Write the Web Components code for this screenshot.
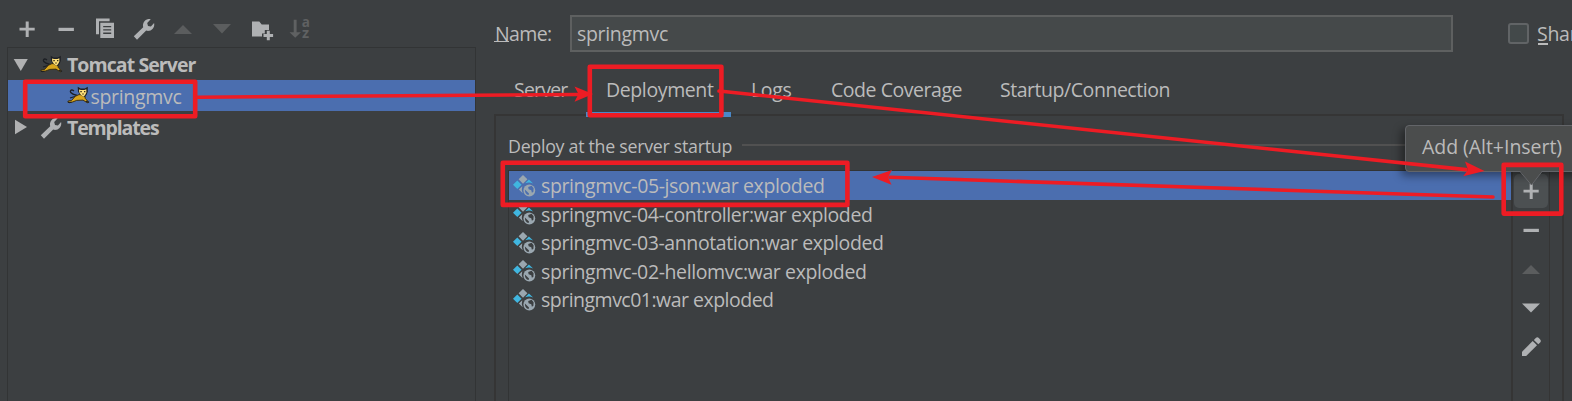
<!DOCTYPE html>
<html lang="en">
<head>
<meta charset="utf-8">
<title>Run/Debug Configurations</title>
<style>
html,body{margin:0;height:100%;overflow:hidden;background:#3c3f41}
body{font-family:"Open Sans","Noto Sans",sans-serif;font-size:19.5px;color:#bbbbbb}
</style>
</head>
<body>
<run-config-dialog></run-config-dialog>
<script>
const define = (name, html, extra) => {
  const tpl = document.createElement('template');
  tpl.innerHTML = html;
  customElements.define(name, class extends HTMLElement {
    constructor() {
      super();
      this.attachShadow({ mode: 'open' }).append(tpl.content.cloneNode(true));
    }
    connectedCallback() { if (extra) extra(this, this.shadowRoot); }
  });
};

/* Label whose letter spacing is adjusted so that it is exactly [w] pixels wide */
define('ui-label', `<style>
  :host{display:inline-block;white-space:pre;line-height:var(--lh,30px)}
  :host([bold]){font-weight:700}
  span{display:inline-block}
</style><span><slot></slot></span>`, (el, root) => {
  const w = parseFloat(el.getAttribute('w'));
  if (!w) return;
  const n = el.textContent.length;
  const span = root.querySelector('span');
  const natural = span.getBoundingClientRect().width;
  el.style.letterSpacing = ((w - natural) / n) + 'px';
  el.style.width = w + 'px';
});

const WRENCH = '<path fill="#afb1b3" d="M1.8 19.2 11.2 10.2C10.3 6.6 12.4 2.9 16.3 2.1 17.3 1.9 18.1 2 18.7 2.2L15.2 5.9 16 8.9 18.9 9.5 22.1 6C22.9 9.8 20.6 13.1 17.4 13.8 16.2 14 15 13.9 14.2 13.6L5 22.8Z"/>';
const ICONS = {
  add: '<path fill="#afb1b3" d="M10.7 4.5h3v6.3h6v2.8h-6V20h-3v-6.4H4.5v-2.8h6.2z"/>',
  remove: '<path fill="#afb1b3" d="M4.5 10.8h15.4v3.2H4.5z"/>',
  copy: '<path fill="#afb1b3" d="M3 1.5h13.6v2.8H6v13H3z"/><path fill="#afb1b3" fill-rule="evenodd" d="M7.3 5.8H21V21H7.3zM10.2 9v1.3h8V9zM10.2 12.2v1.4h8v-1.4zM10.2 15.5v1.4h8v-1.4z"/>',
  wrench: WRENCH,
  up: '<path fill="#5b5d5e" d="M3 17 12 8l9 9z"/>',
  down: '<path fill="#5b5d5e" d="M3 7h18l-9 9.4z"/>',
  downOn: '<path fill="#afb1b3" d="M3 7.4h18l-9 9z"/>',
  folder: '<path fill="#afb1b3" d="M2 4.5h7.3l2.4 3H19v5.4h-4.2v3.6H12V19.500H2z"/><path fill="#afb1b3" d="M16.800 13.800h3v3.200h3.300v2.900h-3.300v3.300h-3v-3.300h-3.300V17h3.300z"/>',
  sort: '<path fill="#5f6162" d="M4.700 2.800h2.900v12.400h4.300L6.200 20.800.500 15.200h4.200z"/><text font-weight="700" fill="#5f6162"><tspan x="12.800" y="10" font-size="13.500">a</tspan><tspan x="13.100" y="20.800" font-size="14.500">z</tspan></text>',
  pencil: '<path fill="#afb1b3" d="M3 16.700 13.700 6l4.300 4.300L7.200 21.100H3z"/><path fill="#afb1b3" d="m14.900 4.900 1.900-1.900q1.500-1.500 3 0l1.400 1.400q1.500 1.500 0 3l-1.900 1.900z"/>',
  open: '<path fill="#b0b1b2" d="M4.700 6h14.100l-7 12z"/>',
  closed: '<path fill="#b0b1b2" d="M6 4.700 18 12 6 19.300z"/>',
  tomcat: '<path fill="none" stroke="#1c1f24" stroke-width="1.300" d="M11 11.500C9 11 6 10 4.700 8.500 3.800 7 5 5.500 6.700 6.200L8 7M9 12.500 4 14"/><path fill="#d9a51c" stroke="#33280c" stroke-width=".9" d="M9.300 12.300 13 10.600l5.800.3.5 3.600 3 3.100-.8 1.300-4.500-2.800-6.300.3-3.800 1.500-3.300.8-1.800-.6.500-1.200 3.200-.4z"/><path fill="#1e2026" d="M11.700 2.800 14.600 4.500h4.200l3-1.800v5l-1.100 3-2.600 2.600-3.800-2.500-2.300-3z"/><path fill="#ffe07a" d="m13 5.400 2 .5h3.500l1.800-.6.1 3.300-1.300 2.300-1.600 1.900-2.500-1.800-1.700-2.600z"/><path fill="#3b3014" d="M14.300 7h1.500v1.200h-1.500zM18 7h1.400v1.200H18zM16.200 9.500h1.600v1h-1.600z"/><path fill="none" stroke="#1e2026" stroke-width="1.300" d="m20 17.200 3 1.300M2 18.400h3.500"/>',
  artifact: '<path fill="#9aa7b0" d="M10 .900 14.400 5.300 10 9.700 5.600 5.300z"/><path fill="#40b6e0" d="M4.300 6.500 8.600 10.800 4.300 15.100 0 10.800z"/><path fill="#40b6e0" d="m12.200 9.200 3.700-3.700 4.200 3.900q-4-1.900-7.900-.2z"/><path fill="#9aa7b0" d="M9.300 12.200 5.900 15.600l3.800 3.700q-1.600-3.600-.4-7.100z"/><circle cx="16.300" cy="16.500" r="5.900" fill="#9aa7b0"/><path fill="var(--bg,#3c3f41)" d="M11.900 15.400 16 19.600 15.600 21Q11.900 20 11.900 15.400zM15.200 13.100 18.600 11.800 20.600 14.200 20.400 17.800 18.900 18.800 18.300 16.200 15.600 15.300z"/>'
};
define('ui-icon', `<style>
  :host{display:block;width:24px;height:24px;flex:none}
  svg{display:block;width:24px;height:24px;overflow:visible;font-family:"Open Sans",sans-serif}
</style><svg viewBox="0 0 24 24"></svg>`, (el, root) => {
  root.querySelector('svg').innerHTML = ICONS[el.getAttribute('name')];
});

define('tree-row', `<style>
  :host{display:flex;align-items:center;height:31.600px;box-sizing:border-box;--lh:31px}
  :host([selected]){background:#4b6eaf;height:31px;--lh:31px}
</style><slot></slot>`);

define('config-tree', `<style>
  :host{display:flex;flex-direction:column;flex:1;margin-left:7px;border:1px solid #323435;border-bottom:0;padding-top:.4px}
  ui-icon.exp{margin-left:1px} ui-icon.kind{margin-left:6px;margin-right:4px;margin-top:2px}
  .child ui-icon.kind{margin-left:58px;margin-right:.500px}
  .child ui-label{margin-top:2.500px}
</style>
<tree-row><ui-icon class="exp" name="open" style="margin-top:1px"></ui-icon><ui-icon class="kind" name="tomcat"></ui-icon><ui-label bold w="128.500">Tomcat Server</ui-label></tree-row>
<tree-row class="child" selected><ui-icon class="kind" name="tomcat"></ui-icon><ui-label w="91">springmvc</ui-label></tree-row>
<tree-row style="--lh:33px"><ui-icon class="exp" name="closed" style="margin-top:1px"></ui-icon><ui-icon class="kind" name="wrench"></ui-icon><ui-label bold w="91.500" style="margin-top:1px">Templates</ui-label></tree-row>`);

define('tree-toolbar', `<style>
  :host{display:flex;gap:15.100px;height:30px;padding:17px 0 0 15px}
</style>
<ui-icon name="add"></ui-icon><ui-icon name="remove"></ui-icon><ui-icon name="copy"></ui-icon><ui-icon name="wrench"></ui-icon><ui-icon name="up"></ui-icon><ui-icon name="down"></ui-icon><ui-icon name="folder"></ui-icon><ui-icon name="sort"></ui-icon>`);

define('name-row', `<style>
  :host{display:flex;align-items:center;height:37px;padding:15px 0 0 18px}
  :host>*,div{flex:none}
  .n{position:relative;width:75px}
  .n ui-label{margin-left:1px}
  .n::after,.s::after{content:"";position:absolute;left:0;top:22.500px;width:15px;height:1px;background:#bbb}
  .f{box-sizing:border-box;width:883px;margin-left:1px;height:37px;border:2px solid #5e6060;background:#45494a;padding:2px 0 0 5px}
  .c{box-sizing:border-box;width:21px;height:21px;border:2px solid #616466;border-radius:3px;background:#43494a;margin:0 8.500px 0 54.500px}
  .s{position:relative} .s::after{left:1px;top:24px;width:10px;height:2px}
</style>
<div class="n"><ui-label w="56.500">Name:</ui-label></div>
<div class="f"><ui-label w="91">springmvc</ui-label></div>
<div class="c"></div><div class="s"><ui-label w="51">Share</ui-label></div>`);

define('tab-item', `<style>
  :host{display:block;box-sizing:border-box;height:51px;padding:11px 0 0 20px}
  :host([active]){height:53px;border-bottom:5px solid #4a88c7;position:relative}
</style><slot></slot>`);

define('tab-strip', `<style>
  :host{display:grid;grid-template-columns:92px 145px 80px 169px 200px;margin-left:18px;height:51px;padding-top:11px;align-items:start}
  tab-item{margin-top:1px}
</style>
<tab-item><ui-label w="53.500">Server</ui-label></tab-item>
<tab-item active><ui-label w="107.500">Deployment</ui-label></tab-item>
<tab-item><ui-label w="40.500">Logs</ui-label></tab-item>
<tab-item><ui-label w="131">Code Coverage</ui-label></tab-item>
<tab-item><ui-label w="170">Startup/Connection</ui-label></tab-item>`);

define('artifact-row', `<style>
  :host{display:flex;align-items:center;height:28.500px;padding-left:4px;gap:4px;--lh:29.500px}
  :host([selected]){background:#4b6eaf;--bg:#4b6eaf;height:29px}
</style><ui-icon name="artifact"></ui-icon><slot></slot>`);

define('side-toolbar', `<style>
  :host{display:flex;flex-direction:column;align-items:center;width:36px;border-left:2px solid #353535;border-right:1px solid #353535}
  .b{display:flex;align-items:center;justify-content:center;width:34px;height:34px;margin:3px 0 5px;border-radius:5px;background:#4c5052}
  ui-icon{margin-bottom:15px} .b ui-icon{margin:0}
</style><div class="b"><ui-icon name="add"></ui-icon></div>
<ui-icon style="margin-top:4.500px" name="remove"></ui-icon><ui-icon name="up"></ui-icon><ui-icon name="downOn"></ui-icon><ui-icon name="pencil"></ui-icon>`);

define('deployment-panel', `<style>
  :host{display:flex;flex-direction:column;box-sizing:border-box;margin-left:18px;width:1070px;flex:1;border:2px solid #353535;border-bottom:0}
  .t{display:flex;align-items:center;height:54px;padding-left:12px;gap:10px}
  .t ui-label{font-size:17.800px;margin-top:5px}
  .t i{flex:1;height:2px;background:#515151;margin-top:4px}
  .g{display:flex;flex:1;padding-left:12px}
  .l{width:1002px;border-left:1px solid #323435;border-top:1px solid #323435}
  side-toolbar{margin-top:1px}
</style>
<div class="t"><ui-label w="224">Deploy at the server startup</ui-label><i></i></div>
<div class="g"><div class="l">
<artifact-row selected><ui-label w="283.500">springmvc-05-json:war exploded</ui-label></artifact-row>
<artifact-row><ui-label w="331.500">springmvc-04-controller:war exploded</ui-label></artifact-row>
<artifact-row><ui-label w="342.500">springmvc-03-annotation:war exploded</ui-label></artifact-row>
<artifact-row><ui-label w="325.500">springmvc-02-hellomvc:war exploded</ui-label></artifact-row>
<artifact-row><ui-label w="232.500">springmvc01:war exploded</ui-label></artifact-row>
</div><side-toolbar></side-toolbar></div>`);

define('tool-tip', `<style>
  :host{position:absolute;left:1405px;top:125px;box-sizing:border-box;width:180px;height:47px;padding:6px 0 0 16px;background:#4b4d4d;border:1px solid #636569;border-radius:4px;box-shadow:-4px 4px 9px #0006;--lh:30px}
  svg{position:absolute;left:114px;top:44px}
</style><ui-label w="140">Add (Alt+Insert)</ui-label>
<svg width="24" height="17"><path d="M0 0V1L11.500 15 22 1V0z" fill="#4b4d4d"/><path d="M0 1.500 11.500 15 22 1.500" fill="none" stroke="#636569"/></svg>`);

/* Red highlight frames and the arrows that lead from step to step */
define('step-marks', `<style>
  :host{position:absolute;left:0;top:0;pointer-events:none} svg{display:block}
</style><svg width="1572" height="401" fill="none" stroke="#ed1c24" stroke-width="4.600" stroke-linejoin="round" stroke-linecap="round">
<rect x="25.200" y="81.800" width="170" height="34.400"/><rect x="589.800" y="66.700" width="131.600" height="48.600"/>
<rect x="502.800" y="162.700" width="344.600" height="42.200"/><rect x="1503.700" y="164.900" width="57.600" height="48.700"/>
<g stroke-width="3.600"><path d="M197 97.200 578 94.500M719 91 1466 169.600M1493 197 890 177.300"/></g>
<g fill="#ed1c24" stroke="none"><path d="m593 94-18.500-7.500 4 7.600-4 7.700zM1484.500 171l-19.500-9.500 3 8.200-4.800 6.600zM872 176.900l20-6.900-4 7.200 3.500 7.500z"/></g></svg>`);

define('run-config-dialog', `<style>
  :host{display:grid;grid-template-columns:476px 1096px;position:relative;width:1572px;height:401px;overflow:hidden;background:#3c3f41}
  .col{display:flex;flex-direction:column;min-width:0}
</style>
<div class="col"><tree-toolbar></tree-toolbar><config-tree></config-tree></div>
<div class="col"><name-row></name-row><tab-strip></tab-strip><deployment-panel></deployment-panel></div>
<tool-tip></tool-tip><step-marks></step-marks>`);
</script>
</body>
</html>
